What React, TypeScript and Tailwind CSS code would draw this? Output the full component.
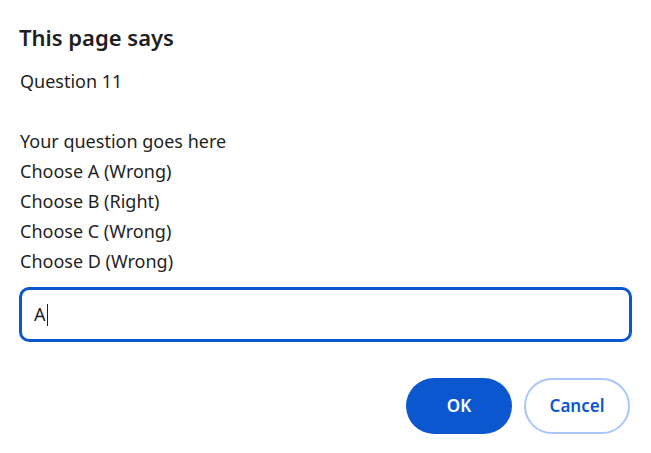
export default function App() {
  const lines = [
    "Your question goes here",
    "Choose A (Wrong)",
    "Choose B (Right)",
    "Choose C (Wrong)",
    "Choose D (Wrong)",
  ];
  return (
    <div
      className="w-[651px] h-[453px] bg-white text-[#1f1f1f] px-[19px] pt-[22px]"
      style={{ fontFamily: '"Segoe UI", "Noto Sans", Arial, sans-serif' }}
    >
      <h1 className="text-[22px] leading-[30px] font-semibold">This page says</h1>
      <div className="mt-[14px] text-[18px] leading-[30px] pl-px">
        <div>Question 11</div>
        <div className="h-[30px]" />
        {lines.map((l) => (
          <div key={l}>{l}</div>
        ))}
      </div>
      <div className="mt-[11px] h-[55px] rounded-[10px] border-[3px] border-[#0b57d0] flex items-center px-[12px] text-[18px]">
        <span>A</span>
        <span className="w-px h-[22px] bg-[#1f1f1f] ml-px" />
      </div>
      <div className="flex justify-end gap-[12px] mt-[36px] pr-[2px]">
        <button className="w-[106px] h-[56px] rounded-full bg-[#0b57d0] text-white text-[17px] font-semibold">
          OK
        </button>
        <button className="w-[106px] h-[56px] rounded-full border-2 border-[#a8c7fa] text-[#0b57d0] text-[17px] font-semibold">
          Cancel
        </button>
      </div>
    </div>
  );
}
